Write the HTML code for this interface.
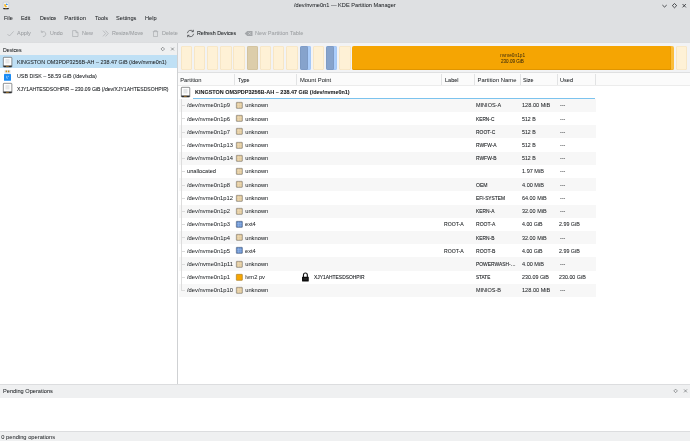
<!DOCTYPE html>
<html lang="en"><head><meta charset="utf-8"><title>/dev/nvme0n1 — KDE Partition Manager</title>
<style>
html,body{margin:0;padding:0;}
body{width:690px;height:441px;overflow:hidden;background:#fff;position:relative;font-family:"Liberation Sans",sans-serif;font-size:5.9px;color:#232629;}
.a{position:absolute;}
.t{position:absolute;white-space:nowrap;line-height:8px;height:8px;transform-origin:0 50%;-webkit-text-stroke:.03px currentColor;}
.dis{color:#9da0a3;}
.b{font-weight:bold;color:#16181a;-webkit-text-stroke:.16px #16181a;}
.sm{color:#3a2c10;-webkit-text-stroke:0;}
svg{position:absolute;overflow:visible;}

.hdr{left:0;top:0;width:690px;height:43px;background:#dee0e2;}
.hline{left:0;top:41.6px;width:690px;height:1.4px;background:linear-gradient(#d2d4d6,#e6e7e9);}
.dockh{background:#eff0f1;}
.sel{background:#bfe0f5;}
.bar{position:absolute;top:46.05px;height:23.9px;border-radius:2px;box-sizing:border-box;overflow:hidden;}
.bar i{position:absolute;left:0;top:0;bottom:0;border-radius:2px;}
.cream{background:#fef1d6;box-shadow:inset 0 0 0 .6px #f2dfba;}
.tan{background:#dccdaa;box-shadow:inset 0 0 0 .6px #cbbb96;}
.blue{background:#aacdfb;box-shadow:inset 0 0 0 .5px #a0c2f0;}
.blue i{width:71%;background:#86a3cc;box-shadow:inset 0 0 0 .6px #7a96c0;}
.org{background:#fbbd3a;box-shadow:inset 0 -.6px 0 0 #e9a21a;}
.org i{right:2.9px;background:#f5a503;box-shadow:inset 0 -.8px 0 0 #d99000, inset -.6px 0 0 0 #e39800;}
.hc{position:absolute;top:73px;height:12.5px;background:#fcfcfc;}
.rowg{position:absolute;left:178.5px;width:417px;height:13.22px;background:#f7f7f7;}
.ti{position:absolute;width:6.2px;height:6.4px;border-radius:1px;box-sizing:border-box;left:236.4px;}

</style></head><body>
<div class="a hdr"></div><div class="a hline"></div>
<div class="a dockh" style="left:0;top:43px;width:177.2px;height:12px"></div>
<div class="a sel" style="left:0;top:55.2px;width:177.2px;height:13.3px"></div>
<div class="a" style="left:177.2px;top:43px;width:0.7px;height:341.2px;background:#cfd1d3"></div>
<div class="a" style="left:177.9px;top:43px;width:512.1px;height:29.6px;background:#f2f3f5"></div>
<div class="a" style="left:177.9px;top:72.4px;width:512.1px;height:0.7px;background:#dfe0e1"></div>
<div class="bar cream" style="left:180.55px;width:11.3px"></div>
<div class="bar cream" style="left:193.79px;width:11.3px"></div>
<div class="bar cream" style="left:207.02px;width:11.3px"></div>
<div class="bar cream" style="left:220.25px;width:11.3px"></div>
<div class="bar cream" style="left:233.49px;width:11.3px"></div>
<div class="bar tan" style="left:246.73px;width:11.3px"></div>
<div class="bar cream" style="left:259.96px;width:11.3px"></div>
<div class="bar cream" style="left:273.19px;width:11.3px"></div>
<div class="bar cream" style="left:286.43px;width:11.3px"></div>
<div class="bar blue" style="left:299.67px;width:11.3px"><i></i></div>
<div class="bar cream" style="left:312.90px;width:11.3px"></div>
<div class="bar blue" style="left:326.13px;width:11.3px"><i></i></div>
<div class="bar cream" style="left:339.37px;width:11.3px"></div>
<div class="bar org" style="left:352.2px;width:321.6px"><i></i></div>
<div class="bar cream" style="left:675.7px;width:11.3px"></div>
<div class="a" style="left:177.9px;top:73px;width:512.1px;height:12.5px;background:#fbfbfb"></div>
<div class="a" style="left:234.15px;top:73.6px;width:0.7px;height:11.4px;background:#e2e3e4"></div>
<div class="a" style="left:296.25px;top:73.6px;width:0.7px;height:11.4px;background:#e2e3e4"></div>
<div class="a" style="left:441.45px;top:73.6px;width:0.7px;height:11.4px;background:#e2e3e4"></div>
<div class="a" style="left:474.15px;top:73.6px;width:0.7px;height:11.4px;background:#e2e3e4"></div>
<div class="a" style="left:519.90px;top:73.6px;width:0.7px;height:11.4px;background:#e2e3e4"></div>
<div class="a" style="left:557.40px;top:73.6px;width:0.7px;height:11.4px;background:#e2e3e4"></div>
<div class="a" style="left:595.05px;top:73.6px;width:0.7px;height:11.4px;background:#e2e3e4"></div>
<div class="a" style="left:177.9px;top:85.2px;width:512.1px;height:0.5px;background:#ececec"></div>
<div class="rowg" style="top:98.80px"></div>
<div class="rowg" style="top:125.24px"></div>
<div class="rowg" style="top:151.68px"></div>
<div class="rowg" style="top:178.12px"></div>
<div class="rowg" style="top:204.56px"></div>
<div class="rowg" style="top:231.00px"></div>
<div class="rowg" style="top:257.44px"></div>
<div class="rowg" style="top:283.88px"></div>
<div class="a" style="left:192.9px;top:98.15px;width:402.6px;height:0.75px;background:#7cc3ee"></div>
<div class="a" style="left:181.3px;top:99.2px;width:0.5px;height:191.28px;background:#dcdcdc"></div>
<div class="a" style="left:181.3px;top:105.20px;width:4.2px;height:0.5px;background:#dcdcdc"></div>
<div class="a" style="left:181.3px;top:118.42px;width:4.2px;height:0.5px;background:#dcdcdc"></div>
<div class="a" style="left:181.3px;top:131.64px;width:4.2px;height:0.5px;background:#dcdcdc"></div>
<div class="a" style="left:181.3px;top:144.86px;width:4.2px;height:0.5px;background:#dcdcdc"></div>
<div class="a" style="left:181.3px;top:158.08px;width:4.2px;height:0.5px;background:#dcdcdc"></div>
<div class="a" style="left:181.3px;top:171.30px;width:4.2px;height:0.5px;background:#dcdcdc"></div>
<div class="a" style="left:181.3px;top:184.52px;width:4.2px;height:0.5px;background:#dcdcdc"></div>
<div class="a" style="left:181.3px;top:197.74px;width:4.2px;height:0.5px;background:#dcdcdc"></div>
<div class="a" style="left:181.3px;top:210.96px;width:4.2px;height:0.5px;background:#dcdcdc"></div>
<div class="a" style="left:181.3px;top:224.18px;width:4.2px;height:0.5px;background:#dcdcdc"></div>
<div class="a" style="left:181.3px;top:237.40px;width:4.2px;height:0.5px;background:#dcdcdc"></div>
<div class="a" style="left:181.3px;top:250.62px;width:4.2px;height:0.5px;background:#dcdcdc"></div>
<div class="a" style="left:181.3px;top:263.84px;width:4.2px;height:0.5px;background:#dcdcdc"></div>
<div class="a" style="left:181.3px;top:277.06px;width:4.2px;height:0.5px;background:#dcdcdc"></div>
<div class="a" style="left:181.3px;top:290.28px;width:4.2px;height:0.5px;background:#dcdcdc"></div>
<svg style="left:236.15px;top:102.15px" width="6.7" height="6.7" viewBox="0 0 67 70" preserveAspectRatio="none"><rect x="-3" y="-3" width="73" height="76" fill="#fff"/><rect x="3.5" y="3.5" width="60" height="63" rx="4" fill="#dfc698" stroke="#807b74" stroke-width="7"/><path d="M25 8v54M42 8v54M8 26h51M8 44h51" stroke="#f1e2c2" stroke-width="4.5" fill="none"/></svg>
<svg style="left:236.15px;top:115.15px" width="6.7" height="6.7" viewBox="0 0 67 70" preserveAspectRatio="none"><rect x="-3" y="-3" width="73" height="76" fill="#fff"/><rect x="3.5" y="3.5" width="60" height="63" rx="4" fill="#dfc698" stroke="#807b74" stroke-width="7"/><path d="M25 8v54M42 8v54M8 26h51M8 44h51" stroke="#f1e2c2" stroke-width="4.5" fill="none"/></svg>
<svg style="left:236.15px;top:128.15px" width="6.7" height="6.7" viewBox="0 0 67 70" preserveAspectRatio="none"><rect x="-3" y="-3" width="73" height="76" fill="#fff"/><rect x="3.5" y="3.5" width="60" height="63" rx="4" fill="#dfc698" stroke="#807b74" stroke-width="7"/><path d="M25 8v54M42 8v54M8 26h51M8 44h51" stroke="#f1e2c2" stroke-width="4.5" fill="none"/></svg>
<svg style="left:236.15px;top:142.15px" width="6.7" height="6.7" viewBox="0 0 67 70" preserveAspectRatio="none"><rect x="-3" y="-3" width="73" height="76" fill="#fff"/><rect x="3.5" y="3.5" width="60" height="63" rx="4" fill="#dfc698" stroke="#807b74" stroke-width="7"/><path d="M25 8v54M42 8v54M8 26h51M8 44h51" stroke="#f1e2c2" stroke-width="4.5" fill="none"/></svg>
<svg style="left:236.15px;top:155.15px" width="6.7" height="6.7" viewBox="0 0 67 70" preserveAspectRatio="none"><rect x="-3" y="-3" width="73" height="76" fill="#fff"/><rect x="3.5" y="3.5" width="60" height="63" rx="4" fill="#dfc698" stroke="#807b74" stroke-width="7"/><path d="M25 8v54M42 8v54M8 26h51M8 44h51" stroke="#f1e2c2" stroke-width="4.5" fill="none"/></svg>
<svg style="left:236.15px;top:168.15px" width="6.7" height="6.7" viewBox="0 0 67 70" preserveAspectRatio="none"><rect x="-3" y="-3" width="73" height="76" fill="#fff"/><rect x="3.5" y="3.5" width="60" height="63" rx="4" fill="#dfc698" stroke="#807b74" stroke-width="7"/><path d="M25 8v54M42 8v54M8 26h51M8 44h51" stroke="#f1e2c2" stroke-width="4.5" fill="none"/></svg>
<svg style="left:236.15px;top:181.15px" width="6.7" height="6.7" viewBox="0 0 67 70" preserveAspectRatio="none"><rect x="-3" y="-3" width="73" height="76" fill="#fff"/><rect x="3.5" y="3.5" width="60" height="63" rx="4" fill="#dfc698" stroke="#807b74" stroke-width="7"/><path d="M25 8v54M42 8v54M8 26h51M8 44h51" stroke="#f1e2c2" stroke-width="4.5" fill="none"/></svg>
<svg style="left:236.15px;top:195.15px" width="6.7" height="6.7" viewBox="0 0 67 70" preserveAspectRatio="none"><rect x="-3" y="-3" width="73" height="76" fill="#fff"/><rect x="3.5" y="3.5" width="60" height="63" rx="4" fill="#dfc698" stroke="#807b74" stroke-width="7"/><path d="M25 8v54M42 8v54M8 26h51M8 44h51" stroke="#f1e2c2" stroke-width="4.5" fill="none"/></svg>
<svg style="left:236.15px;top:208.15px" width="6.7" height="6.7" viewBox="0 0 67 70" preserveAspectRatio="none"><rect x="-3" y="-3" width="73" height="76" fill="#fff"/><rect x="3.5" y="3.5" width="60" height="63" rx="4" fill="#dfc698" stroke="#807b74" stroke-width="7"/><path d="M25 8v54M42 8v54M8 26h51M8 44h51" stroke="#f1e2c2" stroke-width="4.5" fill="none"/></svg>
<svg style="left:236.15px;top:221.15px" width="6.7" height="6.7" viewBox="0 0 67 70" preserveAspectRatio="none"><rect x="-3" y="-3" width="73" height="76" fill="#fff"/><rect x="3.5" y="3.5" width="60" height="63" rx="4" fill="#628ece" stroke="#566782" stroke-width="7"/><path d="M25 8v54M42 8v54M8 26h51M8 44h51" stroke="#a6c2ec" stroke-width="4.5" fill="none"/></svg>
<svg style="left:236.15px;top:234.15px" width="6.7" height="6.7" viewBox="0 0 67 70" preserveAspectRatio="none"><rect x="-3" y="-3" width="73" height="76" fill="#fff"/><rect x="3.5" y="3.5" width="60" height="63" rx="4" fill="#dfc698" stroke="#807b74" stroke-width="7"/><path d="M25 8v54M42 8v54M8 26h51M8 44h51" stroke="#f1e2c2" stroke-width="4.5" fill="none"/></svg>
<svg style="left:236.15px;top:247.15px" width="6.7" height="6.7" viewBox="0 0 67 70" preserveAspectRatio="none"><rect x="-3" y="-3" width="73" height="76" fill="#fff"/><rect x="3.5" y="3.5" width="60" height="63" rx="4" fill="#628ece" stroke="#566782" stroke-width="7"/><path d="M25 8v54M42 8v54M8 26h51M8 44h51" stroke="#a6c2ec" stroke-width="4.5" fill="none"/></svg>
<svg style="left:236.15px;top:261.15px" width="6.7" height="6.7" viewBox="0 0 67 70" preserveAspectRatio="none"><rect x="-3" y="-3" width="73" height="76" fill="#fff"/><rect x="3.5" y="3.5" width="60" height="63" rx="4" fill="#dfc698" stroke="#807b74" stroke-width="7"/><path d="M25 8v54M42 8v54M8 26h51M8 44h51" stroke="#f1e2c2" stroke-width="4.5" fill="none"/></svg>
<svg style="left:236.15px;top:274.15px" width="6.7" height="6.7" viewBox="0 0 67 70" preserveAspectRatio="none"><rect x="-3" y="-3" width="73" height="76" fill="#fff"/><rect x="3.5" y="3.5" width="60" height="63" rx="4" fill="#f7a602" stroke="#a87f2c" stroke-width="7"/></svg>
<svg style="left:236.15px;top:287.15px" width="6.7" height="6.7" viewBox="0 0 67 70" preserveAspectRatio="none"><rect x="-3" y="-3" width="73" height="76" fill="#fff"/><rect x="3.5" y="3.5" width="60" height="63" rx="4" fill="#dfc698" stroke="#807b74" stroke-width="7"/><path d="M25 8v54M42 8v54M8 26h51M8 44h51" stroke="#f1e2c2" stroke-width="4.5" fill="none"/></svg>
<svg style="left:301.7px;top:272.36px" width="6.8" height="9.4" viewBox="0 0 71 99"><path d="M15 52V31a20.5 20.5 0 0 1 41 0v21" fill="none" stroke="#151515" stroke-width="12"/><rect x="0" y="50" width="71" height="49" rx="4" fill="#0c0c0c"/><rect x="14" y="70" width="43" height="7" fill="#555"/></svg>
<svg style="left:3.30px;top:56.90px" width="9.20" height="10.40" viewBox="0 0 23 26" preserveAspectRatio="none"><rect x=".8" y=".8" width="21.4" height="24.4" rx="1.8" fill="#fefefe" stroke="#47494b" stroke-width="1.5"/><rect x="6" y="5" width="10.5" height="11.5" rx=".8" fill="#e6e7e8"/><path d="M.8 21.2h21.4v2.2a1.8 1.8 0 0 1-1.8 1.8h-17.800a1.800 1.800 0 0 1-1.800-1.800z" fill="#2b2d2f"/><rect x="7.500" y="22.300" width="7" height="1.700" fill="#c9851c"/></svg>
<svg style="left:4.20px;top:70.20px" width="7" height="10.8" viewBox="0 0 70 108"><rect x="9" y="1" width="52" height="40" fill="#e9ecef" stroke="#cdd2d6" stroke-width="3"/><rect x="16" y="6" width="15" height="16" rx="3" fill="#cf8d16"/><rect x="39" y="6" width="15" height="16" rx="3" fill="#cf8d16"/><rect x="0" y="41" width="70" height="66" rx="5" fill="#1a8bf4"/><path d="M27 58v24h12M43 58v12" stroke="#fff" stroke-width="6" fill="none" opacity=".8"/></svg>
<svg style="left:3.30px;top:83.10px" width="9.20" height="10.40" viewBox="0 0 23 26" preserveAspectRatio="none"><rect x=".8" y=".8" width="21.4" height="24.4" rx="1.8" fill="#fefefe" stroke="#47494b" stroke-width="1.5"/><rect x="6" y="5" width="10.5" height="11.5" rx=".8" fill="#e6e7e8"/><path d="M.8 21.2h21.4v2.2a1.8 1.8 0 0 1-1.8 1.8h-17.800a1.800 1.800 0 0 1-1.800-1.800z" fill="#2b2d2f"/><rect x="7.500" y="22.300" width="7" height="1.700" fill="#c9851c"/></svg>
<svg style="left:181.00px;top:87.05px" width="9.10" height="10.40" viewBox="0 0 23 26" preserveAspectRatio="none"><rect x=".8" y=".8" width="21.4" height="24.4" rx="1.8" fill="#fefefe" stroke="#47494b" stroke-width="1.5"/><rect x="6" y="5" width="10.5" height="11.5" rx=".8" fill="#e6e7e8"/><path d="M.8 21.2h21.4v2.2a1.8 1.8 0 0 1-1.8 1.8h-17.800a1.800 1.800 0 0 1-1.800-1.800z" fill="#2b2d2f"/><rect x="7.500" y="22.300" width="7" height="1.700" fill="#c9851c"/></svg>
<svg style="left:158px;top:45.20px" width="20" height="8" viewBox="0 0 20 8"><path d="M4.75 2.2l1.8 1.8l-1.8 1.8l-1.8-1.8z" fill="none" stroke="#5c5f62" stroke-width=".6"/><path d="M13.1 2.6l2.8 2.8M15.9 2.6l-2.8 2.8" fill="none" stroke="#5c5f62" stroke-width=".6"/></svg>
<div class="a" style="left:0;top:384.2px;width:690px;height:0.8px;background:#dcdddf"></div>
<div class="a dockh" style="left:0;top:385px;width:690px;height:12.7px"></div>
<div class="a" style="left:0;top:431.3px;width:690px;height:0.7px;background:#dcdddf"></div>
<div class="a dockh" style="left:0;top:432px;width:690px;height:9px"></div>
<svg style="left:668px;top:387.2px" width="22" height="8" viewBox="0 0 22 8"><path d="M7.6 2.1l1.8 1.8l-1.8 1.8l-1.8-1.8z" fill="none" stroke="#5c5f62" stroke-width=".6"/><path d="M16 2.4l3 3M19 2.4l-3 3" fill="none" stroke="#5c5f62" stroke-width=".6"/></svg>
<svg style="left:660px;top:0" width="30" height="12" viewBox="0 0 30 12"><path d="M2.4 5.1l2.15 1.9l2.15-1.9" fill="none" stroke="#232629" stroke-width=".8"/><path d="M14.5 3.5l2.2 2.15l-2.2 2.15l-2.2-2.15z" fill="none" stroke="#232629" stroke-width=".8"/><path d="M22.5 4l3.4 3.4M25.9 4l-3.4 3.4" fill="none" stroke="#232629" stroke-width=".8"/></svg>
<svg style="left:2.7px;top:2px" width="6" height="7.4" viewBox="0 0 60 74"><rect x="2" y="2" width="56" height="70" rx="7" fill="#f1f3f6" stroke="#aeb6c0" stroke-width="4"/><circle cx="30" cy="33" r="21" fill="#fdfdfe" stroke="#cdd5df" stroke-width="2"/><path d="M30 33H11a19 19 0 0 0 30 15.500z" fill="#f6b21c"/><path d="M12 22h18v12h-18z" fill="#f6b21c"/><path d="M31 31V14a19 19 0 0 1 17 17z" fill="#1d86e8"/><path d="M2 60h56v6a6 6 0 0 1-6 6h-44a6 6 0 0 1-6-6z" fill="#26282a"/><rect x="22" y="63" width="15" height="5" fill="#e8961a"/></svg>
<svg style="left:0;top:28px" width="320" height="12" viewBox="0 0 320 12"><path d="M7.4 6l2 2l4.2-4.6" fill="none" stroke="#a3a6a9" stroke-width=".6"/><path d="M41.3 2.5v1.7h1.7M41.5 4.1c2-1.2 4.3-.1 4.3 1.9c0 1.6-1.3 2.6-2.9 2.6" fill="none" stroke="#a3a6a9" stroke-width=".6"/><path d="M72.6 2.6h3.4l2 2v3.9h-5.4zM76 2.6v2h2" fill="none" stroke="#a3a6a9" stroke-width=".6"/><path d="M103 2.6l2.6 2.9l-2.6 2.9M105.6 2.6l2.6 2.9l-2.6 2.9" fill="none" stroke="#a3a6a9" stroke-width=".6"/><path d="M152.8 3.6h5.4M154.4 3.6v-1h2.2v1M153.5 3.6v4.9h4v-4.9" fill="none" stroke="#a3a6a9" stroke-width=".6"/><path d="M187.4 5.2a3.2 3.2 0 0 1 5.6-1.8M193.6 5.8a3.2 3.2 0 0 1-5.6 1.8" fill="none" stroke="#232629" stroke-width=".62"/><path d="M193.4 1.8v1.9h-1.9M187.6 9.2v-1.9h1.9" fill="none" stroke="#232629" stroke-width=".62"/><path d="M244.7 5.5l2.6-2.6h5.2v5.2h-5.2z" fill="#a3a6a9"/><path d="M248.5 4.3l2.4 2.4M250.9 4.3l-2.4 2.4" stroke="#dee0e2" stroke-width=".6" fill="none"/></svg>
<div id="tx" style="position:absolute;left:0;top:0;width:690px;height:441px;will-change:transform;">
<span id="t0" class="t" style="left:294.00px;top:1.30px;-webkit-text-stroke-width:0.039px;font-size:5.72px;transform:scaleX(0.9842);">/dev/nvme0n1 — KDE Partition Manager</span>
<span id="t1" class="t" style="left:4.00px;top:13.60px;-webkit-text-stroke-width:0.060px;font-size:5.72px;transform:scaleX(0.9496);">File</span>
<span id="t2" class="t" style="left:21.25px;top:13.60px;-webkit-text-stroke-width:0.061px;font-size:5.72px;transform:scaleX(0.9491);">Edit</span>
<span id="t3" class="t" style="left:39.75px;top:13.60px;-webkit-text-stroke-width:0.072px;font-size:5.72px;transform:scaleX(0.9299);">Device</span>
<span id="t4" class="t" style="left:64.30px;top:13.60px;letter-spacing:0.009px;">Partition</span>
<span id="t5" class="t" style="left:94.50px;top:13.60px;-webkit-text-stroke-width:0.037px;font-size:5.72px;transform:scaleX(0.9886);">Tools</span>
<span id="t6" class="t" style="left:116.00px;top:13.60px;-webkit-text-stroke-width:0.037px;font-size:5.72px;transform:scaleX(0.9875);">Settings</span>
<span id="t7" class="t" style="left:145.00px;top:13.60px;-webkit-text-stroke-width:0.038px;font-size:5.72px;transform:scaleX(0.9863);">Help</span>
<span id="t8" class="t dis" style="left:17.10px;top:29.40px;-webkit-text-stroke-width:0.051px;font-size:5.72px;transform:scaleX(0.9645);">Apply</span>
<span id="t9" class="t dis" style="left:50.00px;top:29.40px;-webkit-text-stroke-width:0.070px;font-size:5.72px;transform:scaleX(0.9327);">Undo</span>
<span id="t10" class="t dis" style="left:81.90px;top:29.40px;-webkit-text-stroke-width:0.061px;font-size:5.72px;transform:scaleX(0.9481);">New</span>
<span id="t11" class="t dis" style="left:112.00px;top:29.40px;-webkit-text-stroke-width:0.063px;font-size:5.72px;transform:scaleX(0.9447);">Resize/Move</span>
<span id="t12" class="t dis" style="left:162.20px;top:29.40px;-webkit-text-stroke-width:0.056px;font-size:5.72px;transform:scaleX(0.9564);">Delete</span>
<span id="t13" class="t" style="left:196.80px;top:29.40px;-webkit-text-stroke-width:0.069px;font-size:5.72px;transform:scaleX(0.9351);">Refresh Devices</span>
<span id="t14" class="t dis" style="left:255.00px;top:29.40px;-webkit-text-stroke-width:0.040px;font-size:5.72px;transform:scaleX(0.9830);">New Partition Table</span>
<span id="t15" class="t" style="left:2.70px;top:45.70px;-webkit-text-stroke-width:0.084px;font-size:5.72px;transform:scaleX(0.9102);">Devices</span>
<span id="t16" class="t" style="left:17.00px;top:58.40px;-webkit-text-stroke-width:0.062px;font-size:5.72px;transform:scaleX(0.9459);">KINGSTON OM3PDP3256B-AH – 238.47 GiB (/dev/nvme0n1)</span>
<span id="t17" class="t" style="left:17.00px;top:71.80px;-webkit-text-stroke-width:0.071px;font-size:5.72px;transform:scaleX(0.9316);">USB DISK – 58.59 GiB (/dev/sda)</span>
<span id="t18" class="t" style="left:17.00px;top:84.60px;-webkit-text-stroke-width:0.096px;font-size:5.72px;transform:scaleX(0.8895);">XJY1AHTESDSOHPIR – 230.09 GiB (/dev/XJY1AHTESDSOHPIR)</span>
<span id="t19" class="t sm" style="left:500.25px;top:52.00px;font-size:4.75px;">nvme0n1p1</span>
<span id="t20" class="t sm" style="left:501.10px;top:57.80px;-webkit-text-stroke-width:0.051px;font-size:4.75px;transform:scaleX(0.9642);">230.09 GiB</span>
<span id="t21" class="t" style="left:180.25px;top:75.80px;font-size:5.80px;">Partition</span>
<span id="t22" class="t" style="left:238.00px;top:75.80px;-webkit-text-stroke-width:0.073px;font-size:5.72px;transform:scaleX(0.9276);">Type</span>
<span id="t23" class="t" style="left:300.00px;top:75.80px;font-size:5.82px;">Mount Point</span>
<span id="t24" class="t" style="left:445.00px;top:75.80px;-webkit-text-stroke-width:0.051px;font-size:5.72px;transform:scaleX(0.9651);">Label</span>
<span id="t25" class="t" style="left:477.60px;top:75.80px;font-size:5.89px;">Partition Name</span>
<span id="t26" class="t" style="left:523.00px;top:75.80px;-webkit-text-stroke-width:0.064px;font-size:5.72px;transform:scaleX(0.9438);">Size</span>
<span id="t27" class="t" style="left:560.40px;top:75.80px;-webkit-text-stroke-width:0.041px;font-size:5.72px;transform:scaleX(0.9810);">Used</span>
<span id="t28" class="t b" style="left:194.75px;top:88.00px;-webkit-text-stroke-width:0.056px;font-size:5.72px;transform:scaleX(0.9568);">KINGSTON OM3PDP3256B-AH – 238.47 GiB (/dev/nvme0n1)</span>
<span id="t29" class="t" style="left:187.00px;top:101.31px;font-size:5.82px;">/dev/nvme0n1p9</span>
<span id="t30" class="t" style="left:245.20px;top:101.31px;font-size:5.78px;">unknown</span>
<span id="t31" class="t" style="left:476.40px;top:101.31px;-webkit-text-stroke-width:0.052px;font-size:5.72px;transform:scaleX(0.9639);">MINIOS-A</span>
<span id="t32" class="t" style="left:521.90px;top:101.31px;-webkit-text-stroke-width:0.042px;font-size:5.72px;transform:scaleX(0.9803);">128.00 MiB</span>
<span id="t33" class="t" style="left:559.50px;top:101.31px;-webkit-text-stroke-width:0.094px;font-size:5.72px;transform:scaleX(0.8926);">---</span>
<span id="t34" class="t" style="left:187.00px;top:114.53px;font-size:5.82px;">/dev/nvme0n1p6</span>
<span id="t35" class="t" style="left:245.20px;top:114.53px;font-size:5.78px;">unknown</span>
<span id="t36" class="t" style="left:476.40px;top:114.53px;-webkit-text-stroke-width:0.126px;font-size:5.72px;transform:scaleX(0.8396);">KERN-C</span>
<span id="t37" class="t" style="left:521.90px;top:114.53px;-webkit-text-stroke-width:0.084px;font-size:5.72px;transform:scaleX(0.9101);">512 B</span>
<span id="t38" class="t" style="left:559.50px;top:114.53px;-webkit-text-stroke-width:0.094px;font-size:5.72px;transform:scaleX(0.8926);">---</span>
<span id="t39" class="t" style="left:187.00px;top:127.75px;font-size:5.82px;">/dev/nvme0n1p7</span>
<span id="t40" class="t" style="left:245.20px;top:127.75px;font-size:5.78px;">unknown</span>
<span id="t41" class="t" style="left:476.40px;top:127.75px;-webkit-text-stroke-width:0.112px;font-size:5.72px;transform:scaleX(0.8641);">ROOT-C</span>
<span id="t42" class="t" style="left:521.90px;top:127.75px;-webkit-text-stroke-width:0.084px;font-size:5.72px;transform:scaleX(0.9101);">512 B</span>
<span id="t43" class="t" style="left:559.50px;top:127.75px;-webkit-text-stroke-width:0.094px;font-size:5.72px;transform:scaleX(0.8926);">---</span>
<span id="t44" class="t" style="left:187.00px;top:140.97px;font-size:5.79px;">/dev/nvme0n1p13</span>
<span id="t45" class="t" style="left:245.20px;top:140.97px;font-size:5.78px;">unknown</span>
<span id="t46" class="t" style="left:476.40px;top:140.97px;-webkit-text-stroke-width:0.113px;font-size:5.72px;transform:scaleX(0.8613);">RWFW-A</span>
<span id="t47" class="t" style="left:521.90px;top:140.97px;-webkit-text-stroke-width:0.084px;font-size:5.72px;transform:scaleX(0.9101);">512 B</span>
<span id="t48" class="t" style="left:559.50px;top:140.97px;-webkit-text-stroke-width:0.094px;font-size:5.72px;transform:scaleX(0.8926);">---</span>
<span id="t49" class="t" style="left:187.00px;top:154.19px;font-size:5.79px;">/dev/nvme0n1p14</span>
<span id="t50" class="t" style="left:245.20px;top:154.19px;font-size:5.78px;">unknown</span>
<span id="t51" class="t" style="left:476.40px;top:154.19px;-webkit-text-stroke-width:0.113px;font-size:5.72px;transform:scaleX(0.8613);">RWFW-B</span>
<span id="t52" class="t" style="left:521.90px;top:154.19px;-webkit-text-stroke-width:0.084px;font-size:5.72px;transform:scaleX(0.9101);">512 B</span>
<span id="t53" class="t" style="left:559.50px;top:154.19px;-webkit-text-stroke-width:0.094px;font-size:5.72px;transform:scaleX(0.8926);">---</span>
<span id="t54" class="t" style="left:187.00px;top:167.41px;-webkit-text-stroke-width:0.035px;font-size:5.72px;transform:scaleX(0.9920);">unallocated</span>
<span id="t55" class="t" style="left:245.20px;top:167.41px;font-size:5.78px;">unknown</span>
<span id="t56" class="t" style="left:521.90px;top:167.41px;-webkit-text-stroke-width:0.047px;font-size:5.72px;transform:scaleX(0.9710);">1.97 MiB</span>
<span id="t57" class="t" style="left:559.50px;top:167.41px;-webkit-text-stroke-width:0.094px;font-size:5.72px;transform:scaleX(0.8926);">---</span>
<span id="t58" class="t" style="left:187.00px;top:180.63px;font-size:5.82px;">/dev/nvme0n1p8</span>
<span id="t59" class="t" style="left:245.20px;top:180.63px;font-size:5.78px;">unknown</span>
<span id="t60" class="t" style="left:476.40px;top:180.63px;-webkit-text-stroke-width:0.095px;font-size:5.72px;transform:scaleX(0.8910);">OEM</span>
<span id="t61" class="t" style="left:521.90px;top:180.63px;-webkit-text-stroke-width:0.047px;font-size:5.72px;transform:scaleX(0.9710);">4.00 MiB</span>
<span id="t62" class="t" style="left:559.50px;top:180.63px;-webkit-text-stroke-width:0.094px;font-size:5.72px;transform:scaleX(0.8926);">---</span>
<span id="t63" class="t" style="left:187.00px;top:193.85px;font-size:5.79px;">/dev/nvme0n1p12</span>
<span id="t64" class="t" style="left:245.20px;top:193.85px;font-size:5.78px;">unknown</span>
<span id="t65" class="t" style="left:476.40px;top:193.85px;-webkit-text-stroke-width:0.123px;font-size:5.72px;transform:scaleX(0.8456);">EFI-SYSTEM</span>
<span id="t66" class="t" style="left:521.90px;top:193.85px;-webkit-text-stroke-width:0.059px;font-size:5.72px;transform:scaleX(0.9520);">64.00 MiB</span>
<span id="t67" class="t" style="left:559.50px;top:193.85px;-webkit-text-stroke-width:0.094px;font-size:5.72px;transform:scaleX(0.8926);">---</span>
<span id="t68" class="t" style="left:187.00px;top:207.07px;font-size:5.82px;">/dev/nvme0n1p2</span>
<span id="t69" class="t" style="left:245.20px;top:207.07px;font-size:5.78px;">unknown</span>
<span id="t70" class="t" style="left:476.40px;top:207.07px;-webkit-text-stroke-width:0.119px;font-size:5.72px;transform:scaleX(0.8520);">KERN-A</span>
<span id="t71" class="t" style="left:521.90px;top:207.07px;-webkit-text-stroke-width:0.059px;font-size:5.72px;transform:scaleX(0.9520);">32.00 MiB</span>
<span id="t72" class="t" style="left:559.50px;top:207.07px;-webkit-text-stroke-width:0.094px;font-size:5.72px;transform:scaleX(0.8926);">---</span>
<span id="t73" class="t" style="left:187.00px;top:220.29px;font-size:5.82px;">/dev/nvme0n1p3</span>
<span id="t74" class="t" style="left:245.20px;top:220.29px;-webkit-text-stroke-width:0.036px;font-size:5.72px;transform:scaleX(0.9901);">ext4</span>
<span id="t75" class="t" style="left:443.60px;top:220.29px;-webkit-text-stroke-width:0.093px;font-size:5.72px;transform:scaleX(0.8943);">ROOT-A</span>
<span id="t76" class="t" style="left:476.40px;top:220.29px;-webkit-text-stroke-width:0.099px;font-size:5.72px;transform:scaleX(0.8852);">ROOT-A</span>
<span id="t77" class="t" style="left:521.90px;top:220.29px;-webkit-text-stroke-width:0.079px;font-size:5.72px;transform:scaleX(0.9175);">4.00 GiB</span>
<span id="t78" class="t" style="left:559.30px;top:220.29px;-webkit-text-stroke-width:0.071px;font-size:5.72px;transform:scaleX(0.9310);">2.99 GiB</span>
<span id="t79" class="t" style="left:187.00px;top:233.51px;font-size:5.82px;">/dev/nvme0n1p4</span>
<span id="t80" class="t" style="left:245.20px;top:233.51px;font-size:5.78px;">unknown</span>
<span id="t81" class="t" style="left:476.40px;top:233.51px;-webkit-text-stroke-width:0.119px;font-size:5.72px;transform:scaleX(0.8520);">KERN-B</span>
<span id="t82" class="t" style="left:521.90px;top:233.51px;-webkit-text-stroke-width:0.059px;font-size:5.72px;transform:scaleX(0.9520);">32.00 MiB</span>
<span id="t83" class="t" style="left:559.50px;top:233.51px;-webkit-text-stroke-width:0.094px;font-size:5.72px;transform:scaleX(0.8926);">---</span>
<span id="t84" class="t" style="left:187.00px;top:246.73px;font-size:5.82px;">/dev/nvme0n1p5</span>
<span id="t85" class="t" style="left:245.20px;top:246.73px;-webkit-text-stroke-width:0.036px;font-size:5.72px;transform:scaleX(0.9901);">ext4</span>
<span id="t86" class="t" style="left:443.60px;top:246.73px;-webkit-text-stroke-width:0.093px;font-size:5.72px;transform:scaleX(0.8943);">ROOT-A</span>
<span id="t87" class="t" style="left:476.40px;top:246.73px;-webkit-text-stroke-width:0.099px;font-size:5.72px;transform:scaleX(0.8852);">ROOT-B</span>
<span id="t88" class="t" style="left:521.90px;top:246.73px;-webkit-text-stroke-width:0.079px;font-size:5.72px;transform:scaleX(0.9175);">4.00 GiB</span>
<span id="t89" class="t" style="left:559.30px;top:246.73px;-webkit-text-stroke-width:0.071px;font-size:5.72px;transform:scaleX(0.9310);">2.99 GiB</span>
<span id="t90" class="t" style="left:187.00px;top:259.95px;font-size:5.85px;">/dev/nvme0n1p11</span>
<span id="t91" class="t" style="left:245.20px;top:259.95px;font-size:5.78px;">unknown</span>
<span id="t92" class="t" style="left:476.40px;top:259.95px;-webkit-text-stroke-width:0.114px;font-size:5.72px;transform:scaleX(0.8603);">POWERWASH-…</span>
<span id="t93" class="t" style="left:521.90px;top:259.95px;-webkit-text-stroke-width:0.047px;font-size:5.72px;transform:scaleX(0.9710);">4.00 MiB</span>
<span id="t94" class="t" style="left:559.50px;top:259.95px;-webkit-text-stroke-width:0.094px;font-size:5.72px;transform:scaleX(0.8926);">---</span>
<span id="t95" class="t" style="left:187.00px;top:273.17px;font-size:5.82px;">/dev/nvme0n1p1</span>
<span id="t96" class="t" style="left:245.20px;top:273.17px;font-size:5.76px;">lvm2 pv</span>
<span id="t97" class="t" style="left:314.30px;top:273.17px;-webkit-text-stroke-width:0.114px;font-size:5.72px;transform:scaleX(0.8596);">XJY1AHTESDSOHPIR</span>
<span id="t98" class="t" style="left:476.40px;top:273.17px;-webkit-text-stroke-width:0.142px;font-size:5.72px;transform:scaleX(0.8140);">STATE</span>
<span id="t99" class="t" style="left:521.90px;top:273.17px;-webkit-text-stroke-width:0.068px;font-size:5.72px;transform:scaleX(0.9371);">230.09 GiB</span>
<span id="t100" class="t" style="left:559.30px;top:273.17px;-webkit-text-stroke-width:0.070px;font-size:5.72px;transform:scaleX(0.9336);">230.00 GiB</span>
<span id="t101" class="t" style="left:187.00px;top:286.39px;font-size:5.79px;">/dev/nvme0n1p10</span>
<span id="t102" class="t" style="left:245.20px;top:286.39px;font-size:5.78px;">unknown</span>
<span id="t103" class="t" style="left:476.40px;top:286.39px;-webkit-text-stroke-width:0.054px;font-size:5.72px;transform:scaleX(0.9601);">MINIOS-B</span>
<span id="t104" class="t" style="left:521.90px;top:286.39px;-webkit-text-stroke-width:0.042px;font-size:5.72px;transform:scaleX(0.9803);">128.00 MiB</span>
<span id="t105" class="t" style="left:559.50px;top:286.39px;-webkit-text-stroke-width:0.094px;font-size:5.72px;transform:scaleX(0.8926);">---</span>
<span id="t106" class="t" style="left:2.70px;top:387.20px;-webkit-text-stroke-width:0.037px;font-size:5.72px;transform:scaleX(0.9878);">Pending Operations</span>
<span id="t107" class="t" style="left:1.30px;top:432.60px;font-size:5.75px;">0 pending operations</span>
</div>
</body></html>
